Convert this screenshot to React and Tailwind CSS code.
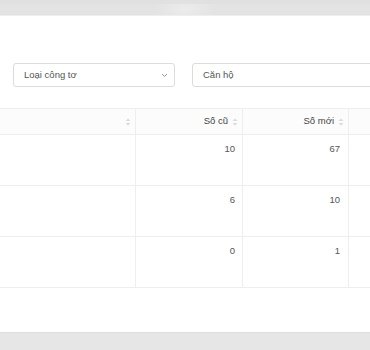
import React from 'react'

const rows = [
  { oldVal: 10, newVal: 67 },
  { oldVal: 6, newVal: 10 },
  { oldVal: 0, newVal: 1 },
]

function SortIcon() {
  return (
    <svg width="6" height="8" viewBox="0 0 6 8" className="shrink-0">
      <path d="M3 0.5 L5.5 3 L0.5 3 Z" fill="#d9d9de" />
      <path d="M3 7.5 L5.5 5 L0.5 5 Z" fill="#d9d9de" />
    </svg>
  )
}

function HeaderCell({ label, className = '' }) {
  return (
    <div className={`flex items-center justify-end gap-[4px] pr-[4px] border-r border-[#eeeef2] ${className}`}>
      {label && <span className="text-[#444]">{label}</span>}
      <SortIcon />
    </div>
  )
}

export default function App() {
  return (
    <div
      className="w-[370px] h-[350px] overflow-hidden flex flex-col bg-white text-[9.5px]"
      style={{ fontFamily: '"Liberation Sans", Arial, sans-serif' }}
    >
      {/* top bar */}
      <div className="h-[16px] shrink-0 border-b border-[#efefef] bg-[radial-gradient(ellipse_30px_14px_at_50%_60%,#ececec,#e3e3e3)]">
        <div className="h-[4px] bg-[#dedede]/60" />
      </div>

      {/* body */}
      <div className="flex-1 min-h-0 flex flex-col">
        {/* filters */}
        <div className="flex items-center gap-[17px] pl-[13px] mt-[47px]">
          <div className="w-[162px] h-[24px] shrink-0 flex items-center justify-between pl-[10px] pr-[6px] border border-[#dcdcdc] rounded-[3px]">
            <span className="text-[#555]">Loại công tơ</span>
            <svg width="7" height="5" viewBox="0 0 7 5">
              <path d="M1 1 L3.5 3.5 L6 1" stroke="#999" strokeWidth="1" fill="none" />
            </svg>
          </div>
          <div className="w-[200px] h-[24px] shrink-0 flex items-center px-[10px] border border-[#dcdcdc] rounded-[3px]">
            <span className="text-[#555]">Căn hộ</span>
          </div>
        </div>

        {/* table */}
        <div className="mt-[21px] w-[420px] border-t border-[#eeeef2]">
          <div className="flex h-[26px] bg-[#fcfcfd] border-b border-[#eeeef2]">
            <HeaderCell className="w-[136px]" />
            <HeaderCell label="Số cũ" className="w-[107px]" />
            <HeaderCell label="Số mới" className="w-[106px]" />
            <div className="flex-1" />
          </div>
          {rows.map((r, i) => (
            <div key={i} className="flex h-[51px] border-b border-[#eeeef2] text-[#555]">
              <div className="w-[136px] border-r border-[#eeeef2]" />
              <div className="w-[107px] border-r border-[#eeeef2] flex justify-end pr-[7px] pt-[7px]">{r.oldVal}</div>
              <div className="w-[106px] border-r border-[#eeeef2] flex justify-end pr-[8px] pt-[7px]">{r.newVal}</div>
              <div className="flex-1" />
            </div>
          ))}
        </div>
      </div>

      {/* bottom bar */}
      <div className="h-[18px] shrink-0 border-t border-[#dedede] bg-[#e6e6e6]" />
    </div>
  )
}
